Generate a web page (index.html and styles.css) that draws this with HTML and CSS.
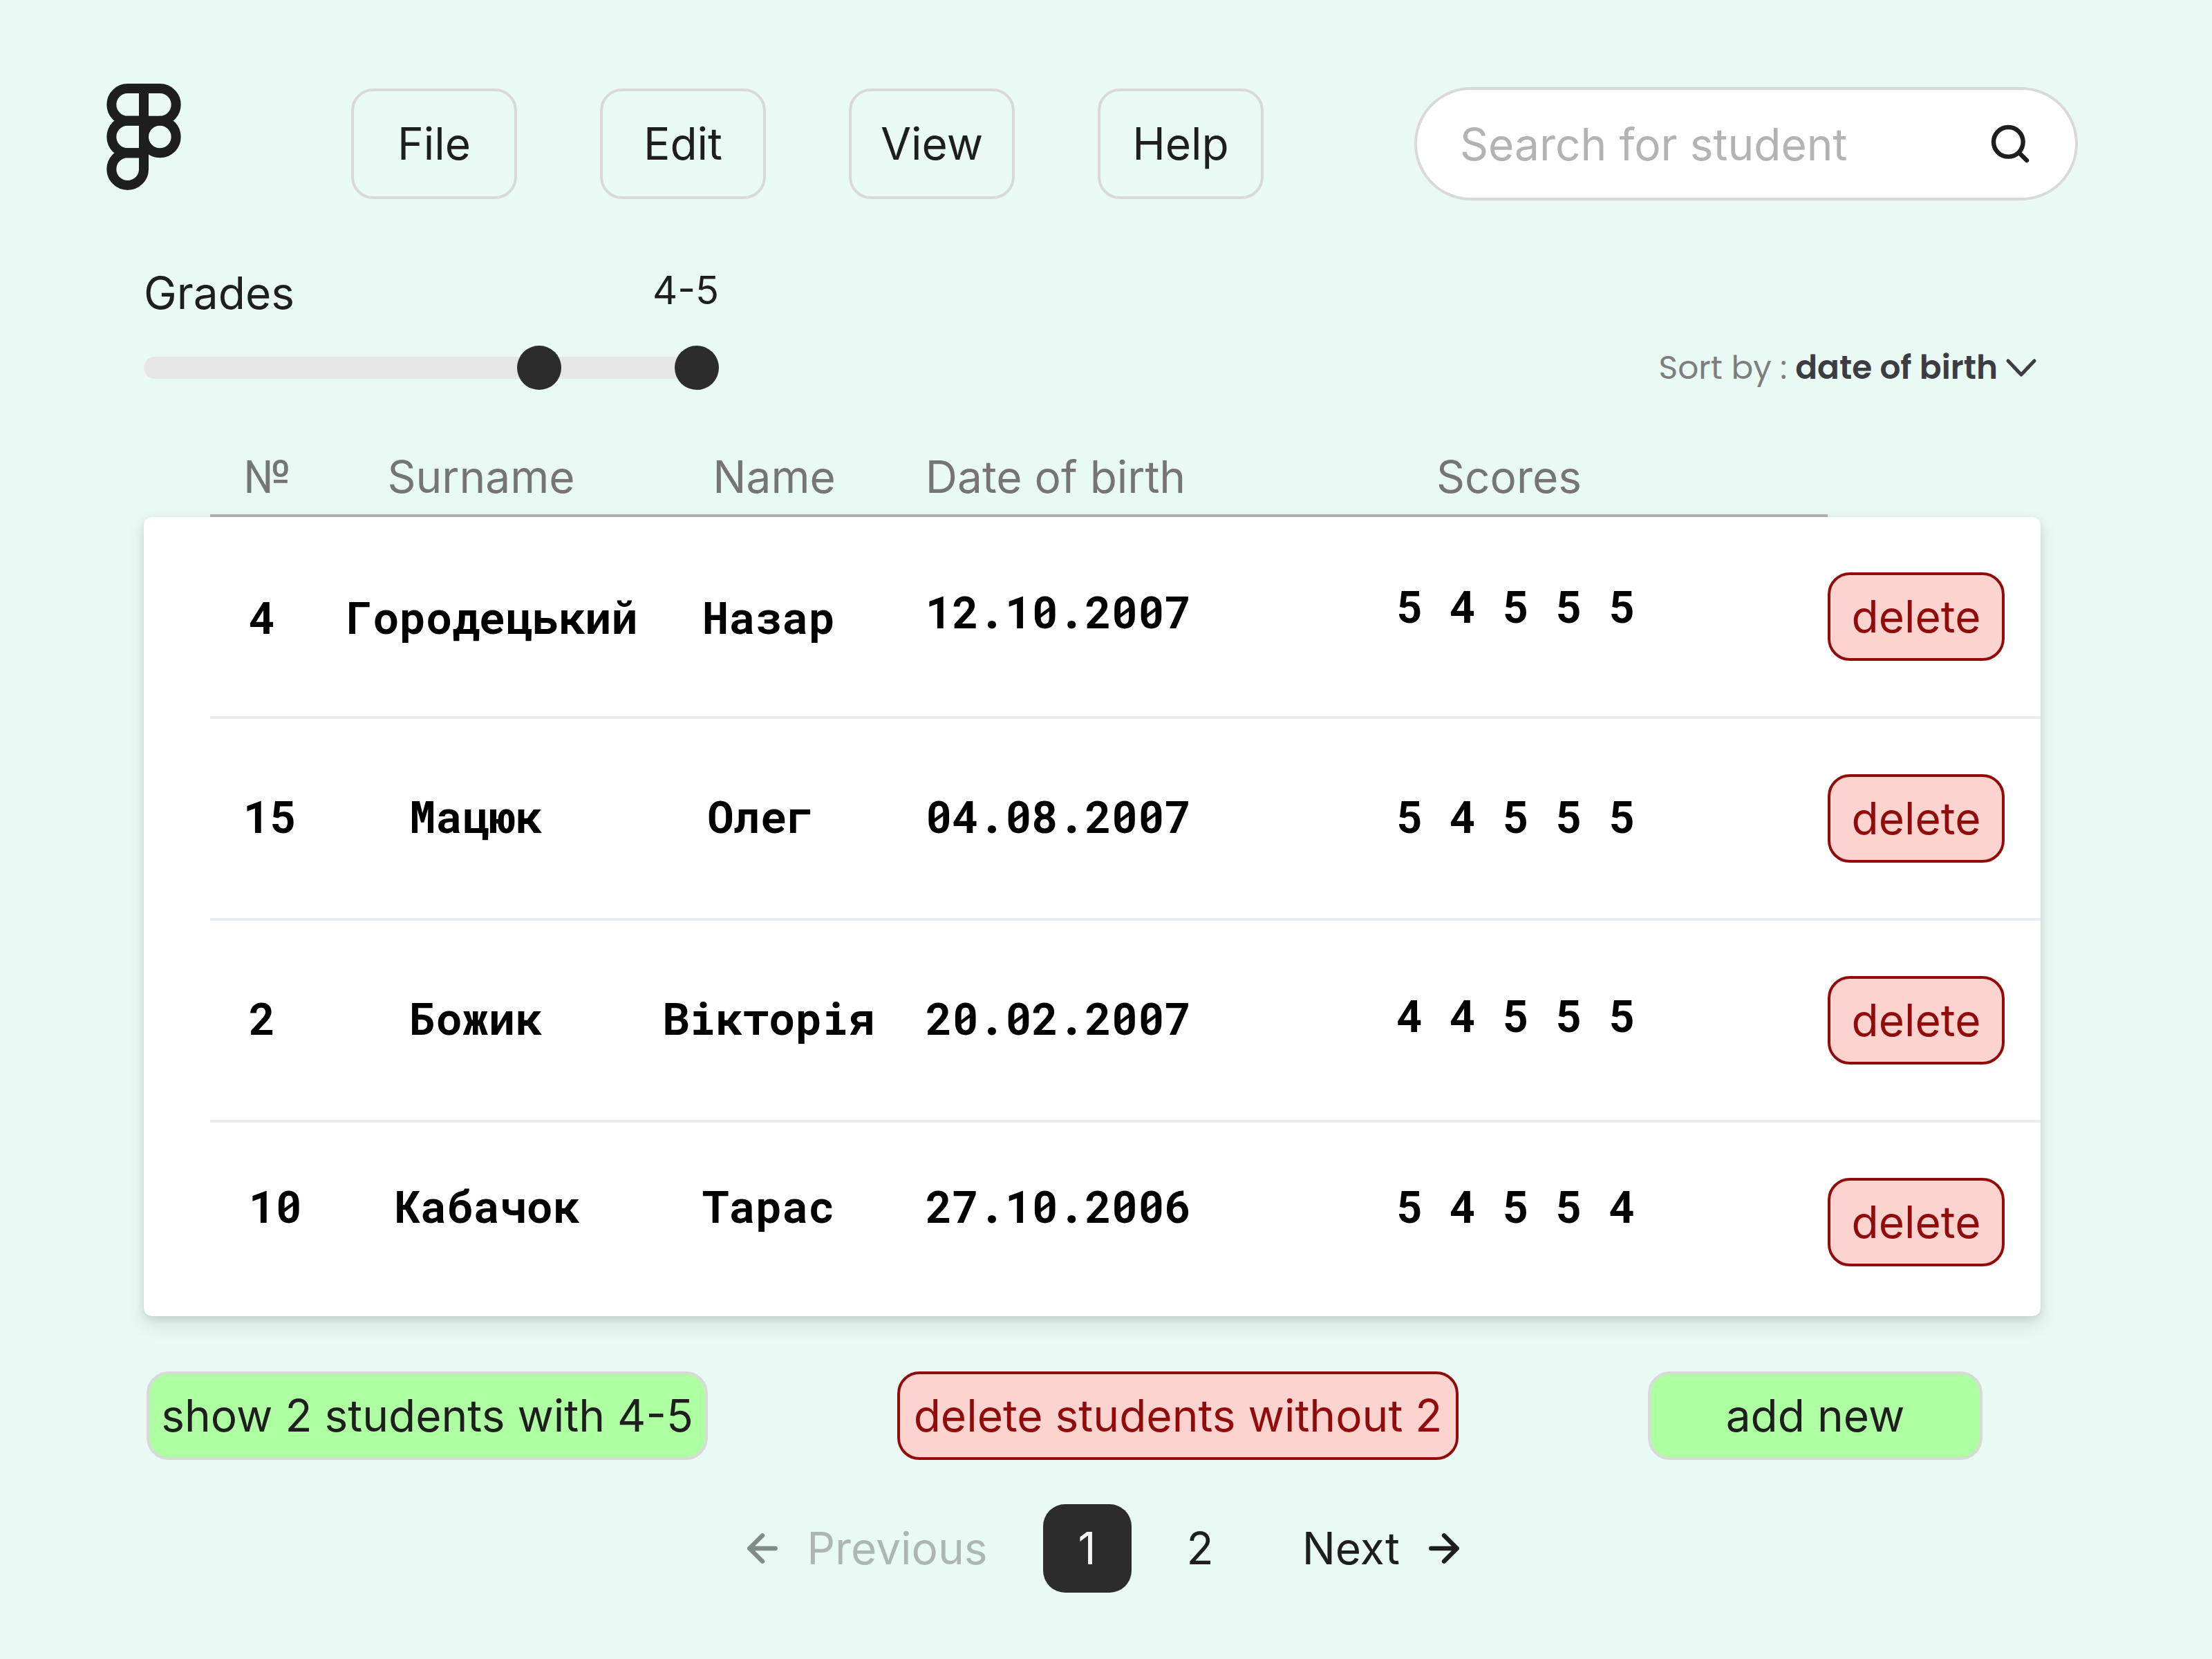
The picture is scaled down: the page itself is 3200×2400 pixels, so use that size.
FILE: index.html
```html
<!DOCTYPE html>
<html lang="en">
<head>
  <meta charset="utf-8">
  <meta name="viewport" content="width=device-width, initial-scale=1">
  <title>Students</title>
  <link rel="stylesheet" href="styles.css">
</head>
<body>
  <header class="topbar">
    <a class="logo" href="#" aria-label="Home">
      <svg viewBox="3.9 0.95 16.2 23.1" fill="none" stroke="currentColor" stroke-width="2.1" stroke-linejoin="round">
        <path d="M5 5.5A3.5 3.5 0 0 1 8.5 2H12v7H8.5A3.5 3.5 0 0 1 5 5.5z"/>
        <path d="M12 2h3.5a3.5 3.5 0 1 1 0 7H12z"/>
        <path d="M12 12.5a3.5 3.5 0 1 1 7 0 3.5 3.5 0 1 1-7 0z"/>
        <path d="M5 12.5A3.5 3.5 0 0 1 8.5 9H12v7H8.5A3.5 3.5 0 0 1 5 12.5z"/>
        <path d="M5 19.5A3.5 3.5 0 0 1 8.5 16H12v3.5a3.5 3.5 0 1 1-7 0z"/>
      </svg>
    </a>
    <nav class="menu">
      <button class="menu-button" type="button">File</button>
      <button class="menu-button" type="button">Edit</button>
      <button class="menu-button" type="button">View</button>
      <button class="menu-button" type="button">Help</button>
    </nav>
    <form class="search" role="search">
      <input class="search-input" type="search" placeholder="Search for student" aria-label="Search for student">
      <button class="search-button" type="button" aria-label="Search">
        <svg class="icon" viewBox="0 0 16 16"><path d="M14 14l-2.9-2.9M12.67 7.33A5.33 5.33 0 1 1 2 7.33a5.33 5.33 0 0 1 10.67 0z"/></svg>
      </button>
    </form>
  </header>

  <main class="content">
    <section class="filters">
      <div class="grades">
        <div class="grades-head">
          <label for="grade-from">Grades</label>
          <output class="grades-value" for="grade-from grade-to">4-5</output>
        </div>
        <div class="range">
          <input class="range-input" id="grade-from" type="range" min="0" max="100" step="any" value="70.3">
          <input class="range-input" id="grade-to" type="range" min="0" max="100" step="any" value="100" aria-label="Highest grade">
        </div>
      </div>
      <button class="sort" type="button">
        <span>Sort by :</span>
        <strong class="sort-value">date of birth</strong>
        <svg class="sort-arrow" viewBox="0 0 44 28"><path d="M3 4l19 20L41 4"/></svg>
      </button>
    </section>

    <table class="students">
      <thead class="students-head">
        <tr class="row">
          <th class="num">№</th>
          <th class="wide-start">Surname</th>
          <th class="wide-start">Name</th>
          <th class="date">Date of birth</th>
          <th class="scores">Scores</th>
        </tr>
      </thead>
      <tbody class="students-body">
        <tr class="row">
          <td class="num num-inset">4</td>
          <td class="start-48">Городецький</td>
          <td>Назар</td>
          <td class="raise-8">12.10.2007</td>
          <td class="scores raise-16">5 4 5 5 5</td>
          <td class="action"><button class="button button-danger" type="button">delete</button></td>
        </tr>
        <tr class="row row-middle">
          <td class="num">15</td>
          <td>Мацюк</td>
          <td class="end-24">Олег</td>
          <td>04.08.2007</td>
          <td class="scores">5 4 5 5 5</td>
          <td class="action"><button class="button button-danger" type="button">delete</button></td>
        </tr>
        <tr class="row row-middle">
          <td class="num num-inset">2</td>
          <td>Божик</td>
          <td>Вікторія</td>
          <td>20.02.2007</td>
          <td class="scores raise-8">4 4 5 5 5</td>
          <td class="action"><button class="button button-danger" type="button">delete</button></td>
        </tr>
        <tr class="row row-last">
          <td class="num num-inset">10</td>
          <td class="start-32">Кабачок</td>
          <td>Тарас</td>
          <td>27.10.2006</td>
          <td class="scores">5 4 5 5 4</td>
          <td class="action"><button class="button button-danger" type="button">delete</button></td>
        </tr>
      </tbody>
    </table>

    <div class="actions">
      <button class="button button-success button-long" type="button">show 2 students with 4-5</button>
      <button class="button button-danger button-long" type="button">delete students without 2</button>
      <button class="button button-success button-wide" type="button">add new</button>
    </div>

    <nav class="pagination" aria-label="Pages">
      <button class="page-step" type="button" disabled>
        <svg class="icon" viewBox="0 0 16 16"><path d="M12.67 8H3.33M8 12.67L3.33 8 8 3.33"/></svg>
        <span class="page-step-muted">Previous</span>
      </button>
      <a class="page page-current" href="#" aria-current="page">1</a>
      <a class="page" href="#">2</a>
      <a class="page-step" href="#">
        <span>Next</span>
        <svg class="icon" viewBox="0 0 16 16"><path d="M3.33 8h9.34M8 3.33L12.67 8 8 12.67"/></svg>
      </a>
    </nav>
  </main>
</body>
</html>
```
FILE: styles.css
```css
:root {
  --bg: #e9faf4;
  --ink: #1e1e1e;
  --dark: #2c2c2c;
  --muted: #757575;
  --faint: #b3b3b3;
  --border: #d9d9d9;
  --danger: #900b09;
  --danger-bg: #fdd3d0;
  --success-bg: #aeffa1;
}

* {
  box-sizing: border-box;
}

body {
  margin: 0;
  background: var(--bg);
  color: var(--ink);
  font: 400 64px/64px Inter, "Liberation Sans", sans-serif;
}

button,
input {
  margin: 0;
  padding: 0;
  border: 0;
  background: none;
  color: inherit;
  font: inherit;
}

a {
  color: inherit;
  text-decoration: none;
}

.icon {
  display: block;
  flex: none;
  width: 64px;
  height: 64px;
  fill: none;
  stroke: currentColor;
  stroke-width: 1.6;
  stroke-linecap: round;
  stroke-linejoin: round;
}

/* Top bar */
.topbar {
  display: flex;
  align-items: center;
  padding: 121px 194px 0 154px;
}

.logo svg {
  display: block;
  width: 108px;
  height: 154px;
}

.logo {
  margin-bottom: 20px;
  margin-right: 246px;
}

.menu {
  display: flex;
  gap: 120px;
}

.menu-button {
  width: 240px;
  height: 160px;
  border: 4px solid var(--border);
  border-radius: 32px;
}

.search {
  display: flex;
  align-items: center;
  width: 960px;
  height: 164px;
  margin-left: auto;
  padding: 0 62px;
  border: 4px solid var(--border);
  border-radius: 82px;
  background: #fff;
}

.search-input {
  flex: 1;
  min-width: 0;
  outline: 0;
}

.search-input::placeholder {
  color: var(--faint);
  opacity: 1;
}

/* Filters */
.content {
  padding: 93px 248px 0 208px;
}

.filters {
  display: flex;
  align-items: flex-end;
  justify-content: space-between;
}

.grades {
  width: 832px;
}

.grades-head {
  display: flex;
  justify-content: space-between;
  height: 112px;
}

.grades-head label {
  padding-top: 4px;
}

.grades-value {
  font-size: 56px;
}

.range {
  display: grid;
  align-items: center;
  height: 64px;
}

.range::before {
  content: "";
  height: 32px;
  border-radius: 16px;
  background: #e6e6e6;
}

.range::before,
.range-input {
  grid-area: 1 / 1;
}

.range-input {
  width: 100%;
  height: 64px;
  appearance: none;
  pointer-events: none;
}

.range-input::-webkit-slider-thumb {
  width: 64px;
  height: 64px;
  border-radius: 50%;
  background: var(--dark);
  appearance: none;
  pointer-events: auto;
}

.sort {
  display: flex;
  align-items: center;
  gap: 12px;
  height: 64px;
  color: #7e7e7e;
  font-family: Poppins, Inter, "Liberation Sans", sans-serif;
  font-size: 47px;
}

.sort-value {
  color: #3d3c42;
  font-weight: 600;
}

.sort-arrow {
  width: 44px;
  height: 28px;
  margin-right: 6px;
  fill: none;
  stroke: #3d3c42;
  stroke-width: 5;
  stroke-linecap: round;
  stroke-linejoin: round;
}

/* Students table */
.students {
  display: block;
  margin-top: 92px;
}

.row {
  display: grid;
  grid-template-columns: minmax(0, 156fr) minmax(0, 456fr) minmax(0, 392fr) minmax(0, 446fr) minmax(0, 890fr);
}

.students-head {
  display: block;
  margin: 0 308px 0 96px;
  border-bottom: 4px solid var(--faint);
  color: var(--muted);
}

.students-head th {
  height: 88px;
  padding: 2px 0 0;
  font-weight: 400;
}

.students-head .num,
.students-body .num {
  padding-left: 48px;
  text-align: left;
}

.students-head .wide-start {
  padding-left: 16px;
}

.students-head .date {
  padding-right: 8px;
}

.students-head .scores {
  padding-right: 32px;
}

.students-body {
  display: block;
  padding-left: 96px;
  border-radius: 12px;
  background: #fff;
  box-shadow: 0 12px 28px rgba(0, 0, 0, 0.1), 0 4px 12px rgba(0, 0, 0, 0.1);
  color: #000;
  font-family: "Roboto Mono", "DejaVu Sans Mono", monospace;
  font-weight: 700;
}

.students-body .row {
  grid-template-columns: minmax(0, 156fr) minmax(0, 456fr) minmax(0, 392fr) minmax(0, 446fr) minmax(0, 890fr) 308px;
  border-bottom: 4px solid #e8ecf0;
}

.students-body td {
  display: grid;
  align-items: center;
  justify-content: center;
  padding: 0;
  white-space: nowrap;
}

.students-body .num {
  justify-content: start;
}

.students-body .num-inset {
  padding-left: 56px;
}

.students-body .scores {
  padding-right: 12px;
}

.students-body .start-32 {
  padding-left: 32px;
}

.students-body .start-48 {
  padding-left: 48px;
}

.students-body .end-24 {
  padding-right: 24px;
}

.students-body .row-middle td {
  padding-bottom: 8px;
}

.students-body td.raise-8.raise-8 {
  padding-bottom: 16px;
}

.students-body .raise-16 {
  padding-bottom: 32px;
}

.students-body .row-last td {
  padding-bottom: 40px;
}

.students-body .row .action {
  justify-content: start;
  padding: 80px 0;
}

.students-body .row-last .action {
  padding-bottom: 72px;
}

.students-body .row-last {
  border-bottom: 0;
}

/* Buttons */
.button {
  height: 128px;
  padding: 0;
  border: 4px solid;
  border-radius: 32px;
  font-family: Inter, "Liberation Sans", sans-serif;
  font-weight: 400;
  white-space: nowrap;
}

.button-danger {
  border-color: var(--danger);
  background: var(--danger-bg);
  color: var(--danger);
}

.button-success {
  border-color: var(--border);
  background: var(--success-bg);
}

.action .button {
  width: 256px;
}

.button-long {
  width: 812px;
}

.button-wide {
  width: 484px;
}

.actions {
  display: flex;
  justify-content: space-between;
  padding: 80px 84px 0 4px;
}

/* Pagination */
.pagination {
  display: flex;
  gap: 32px;
  justify-content: center;
  margin-top: 64px;
  padding-left: 32px;
}

.page,
.page-step {
  display: flex;
  align-items: center;
  gap: 32px;
  height: 128px;
  padding: 0 48px;
  border-radius: 32px;
}

.page-current {
  justify-content: center;
  width: 128px;
  padding: 0;
  background: var(--dark);
  color: #f5f5f5;
}

.page-step:disabled {
  opacity: 0.5;
}

.page-step-muted {
  color: var(--muted);
}
```
